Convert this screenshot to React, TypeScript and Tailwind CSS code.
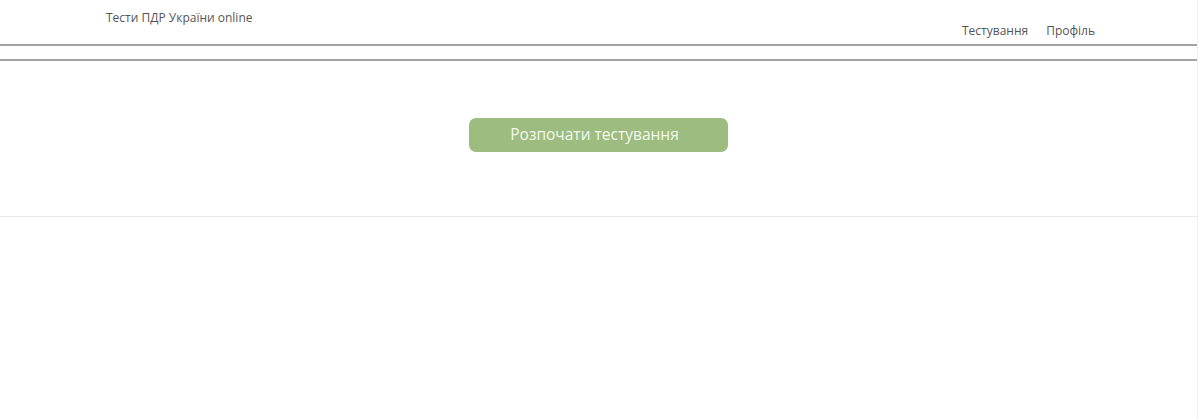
const App = () => {
  return (
    <div className="min-h-[419px] w-[1200px] bg-white font-['Open_Sans',sans-serif] text-[#444]">
      <div className="w-[1198px] min-h-[419px] border-r border-[#eeeeee]">
        <header className="relative h-[46px] border-b-2 border-[#a3a3a3]">
          <div className="absolute left-[106px] top-[9px] text-[12px] leading-[18px] text-[#555]">
            Тести ПДР України online
          </div>
          <nav className="absolute right-[102px] top-[22px] flex gap-[18px] text-[12px] leading-[18px] text-[#555]">
            <a>Тестування</a>
            <a>Профіль</a>
          </nav>
        </header>
        <div className="mt-[13px] h-[2px] bg-[#a3a3a3]" />
        <section className="flex h-[156px] justify-center border-b border-[#e8e8e8] pt-[57px]">
          <button className="h-[34px] w-[259px] rounded-[7px] bg-[#9dbc80] pr-2 text-[15.5px] text-[#f4f8ee]">
            Розпочати тестування
          </button>
        </section>
      </div>
    </div>
  );
};

export default App;
